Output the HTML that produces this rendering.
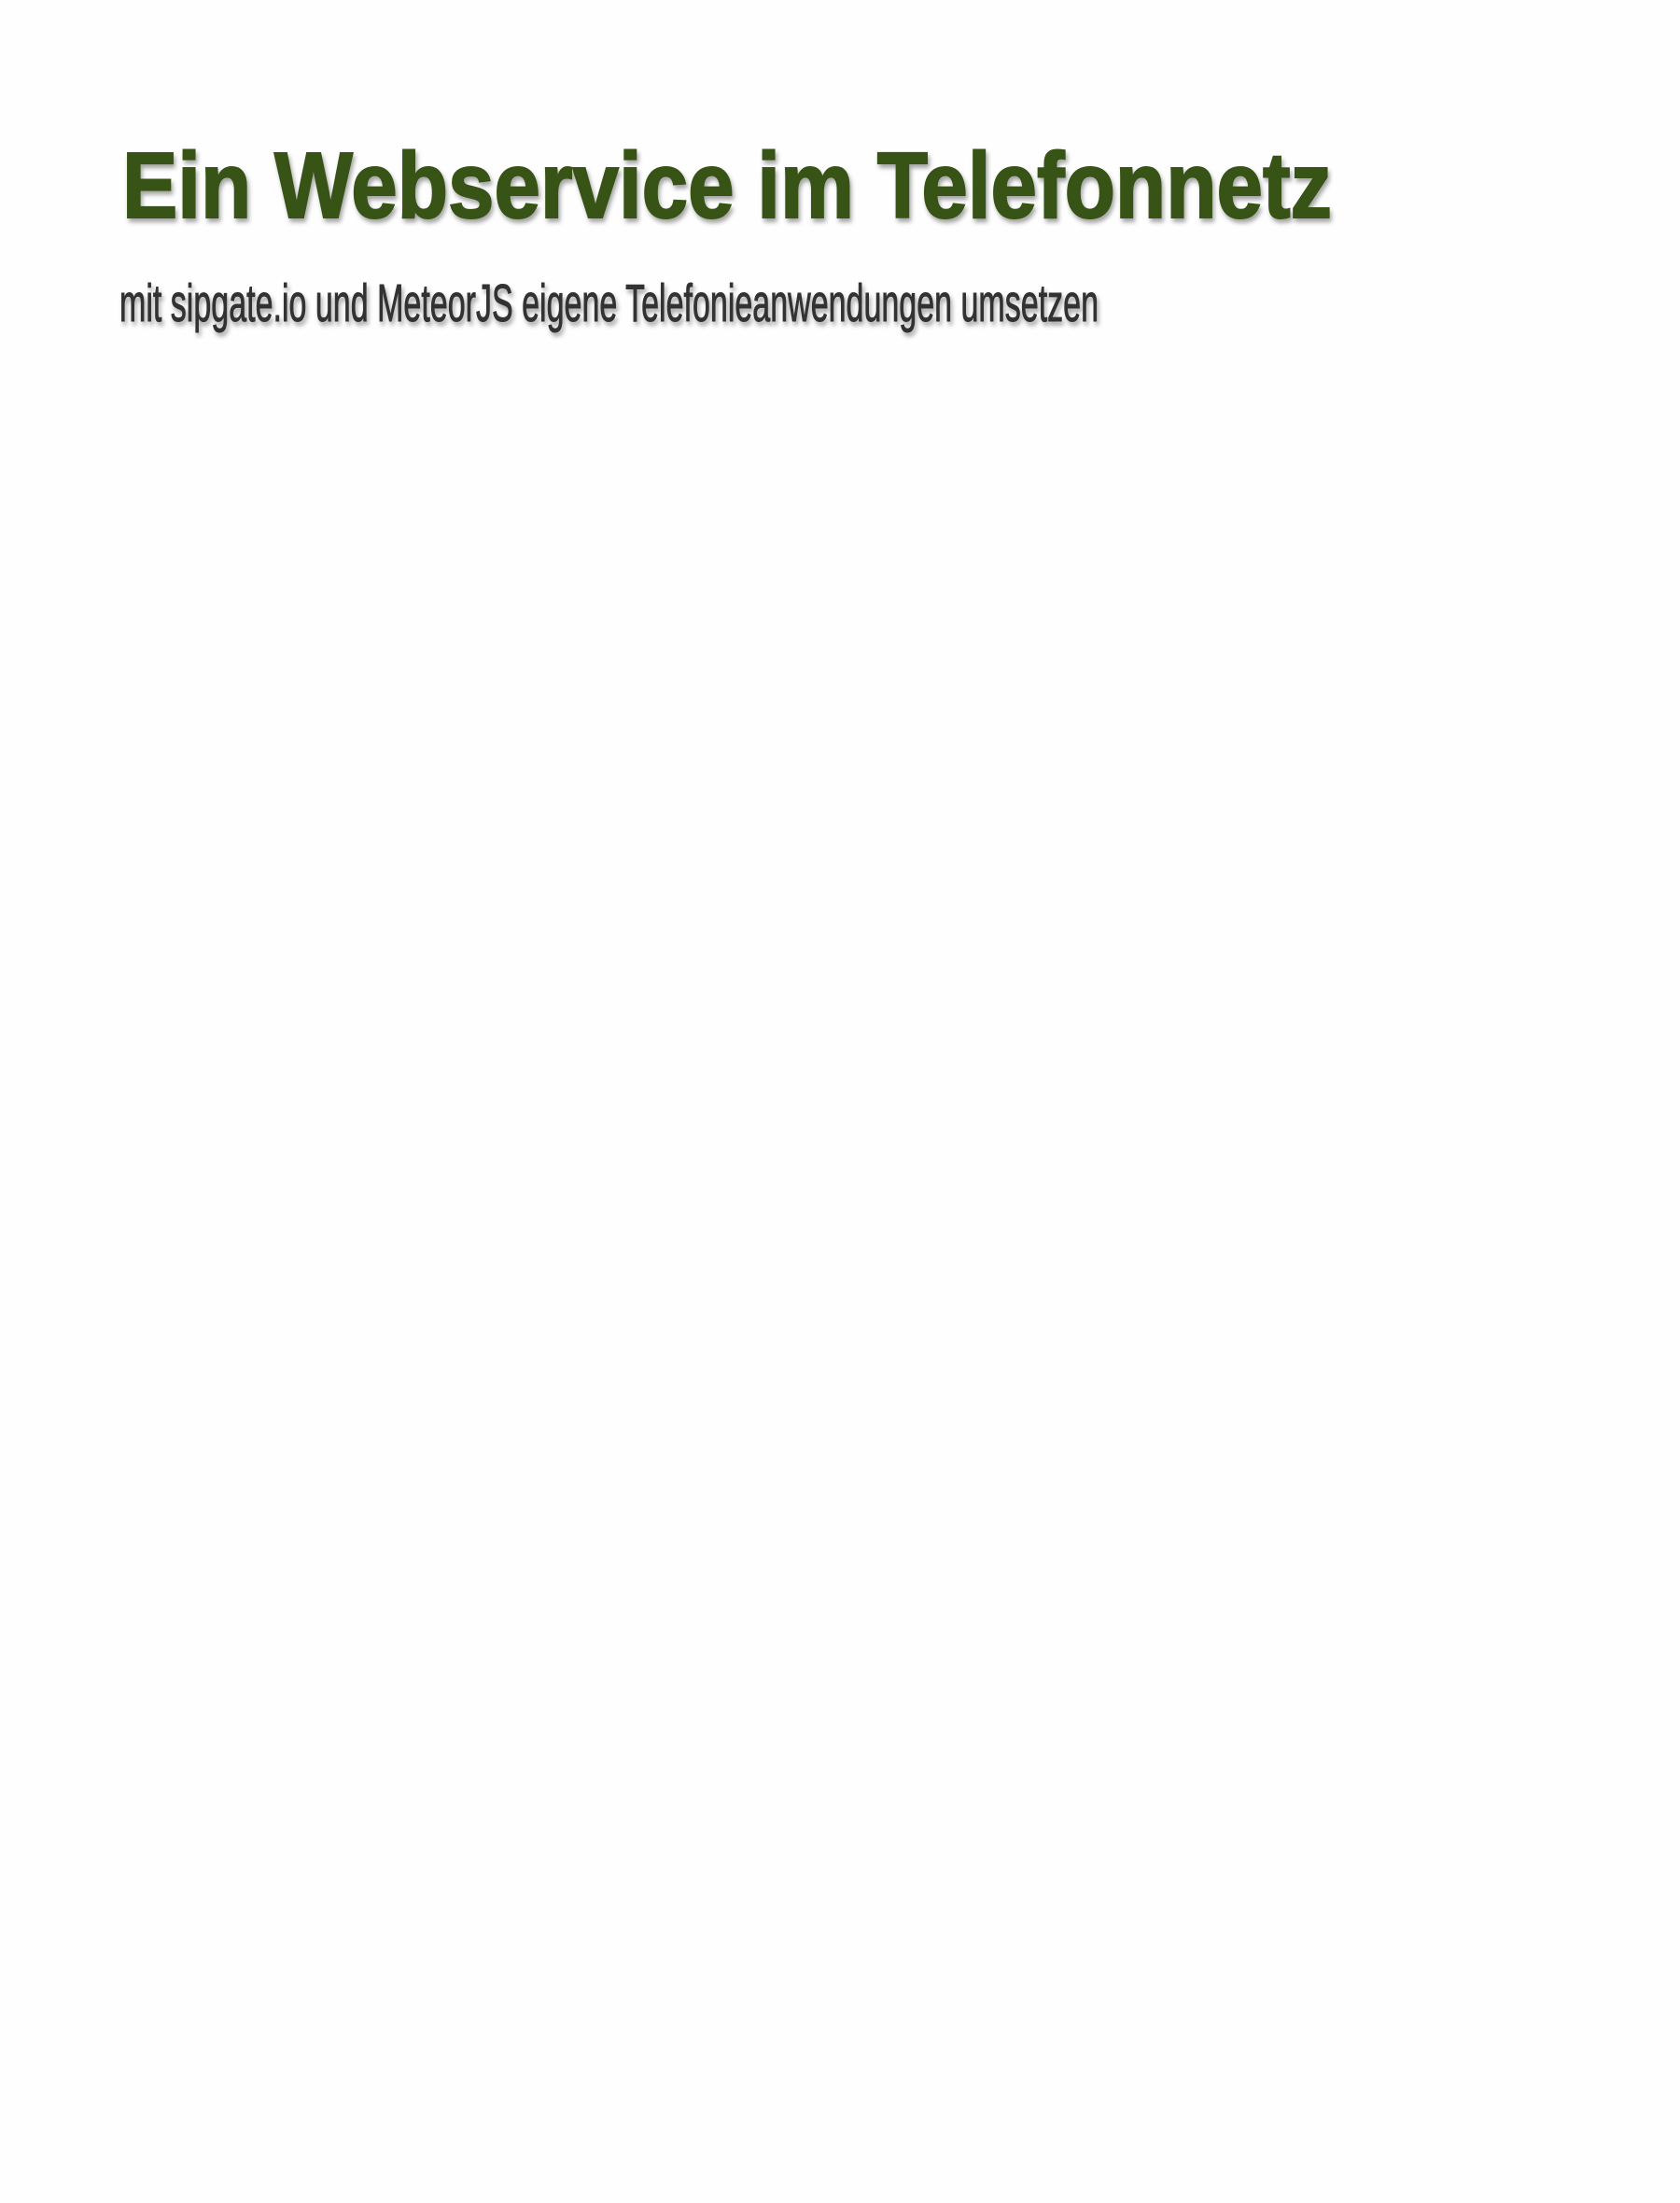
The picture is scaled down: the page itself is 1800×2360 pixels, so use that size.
<!DOCTYPE html>
<html><head><meta charset="utf-8"><style>
html,body{margin:0;padding:0;background:#fefefe;width:1800px;height:2360px;overflow:hidden}
svg{position:absolute;left:0;top:0}
</style></head><body>
<svg width="1800" height="2360" xmlns="http://www.w3.org/2000/svg">
<defs>
<filter id="s" x="-5%" y="-20%" width="110%" height="150%">
<feDropShadow dx="2" dy="4" stdDeviation="2.5" flood-color="#000" flood-opacity="0.35"/>
</filter>
</defs>
<text x="131" y="233" font-family="Liberation Sans, sans-serif" font-weight="bold" font-size="100" fill="#375214" stroke="#375214" stroke-width="2" textLength="1296" lengthAdjust="spacingAndGlyphs" filter="url(#s)">Ein Webservice im Telefonnetz</text>
<text x="128" y="344" font-family="Liberation Sans, sans-serif" font-size="57" fill="#333333" stroke="#333333" stroke-width="1" textLength="1049" lengthAdjust="spacingAndGlyphs" filter="url(#s)">mit sipgate.io und MeteorJS eigene Telefonieanwendungen umsetzen</text>
</svg>
</body></html>
